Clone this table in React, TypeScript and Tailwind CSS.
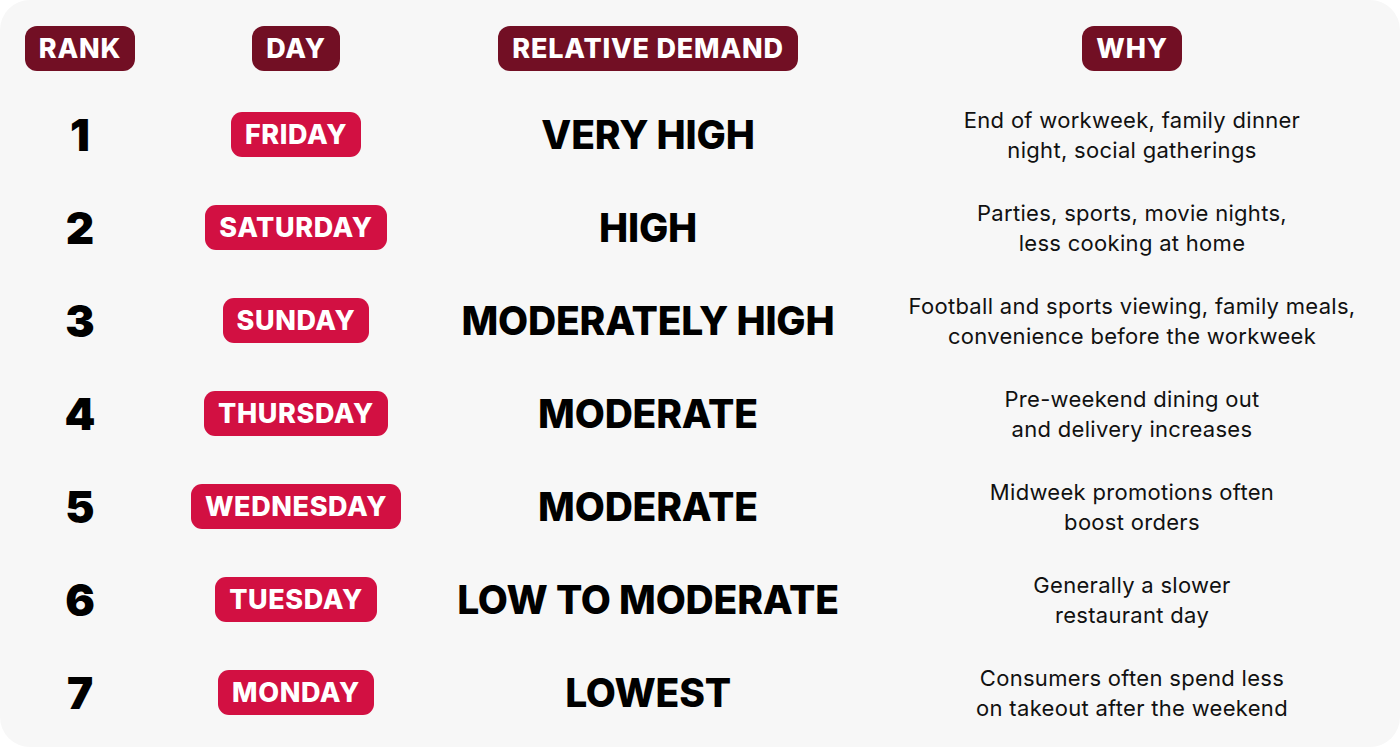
import React from "react";

const rows = [
  { rank: "1", day: "FRIDAY", demand: "VERY HIGH", why: ["End of workweek, family dinner", "night, social gatherings"] },
  { rank: "2", day: "SATURDAY", demand: "HIGH", why: ["Parties, sports, movie nights,", "less cooking at home"] },
  { rank: "3", day: "SUNDAY", demand: "MODERATELY HIGH", why: ["Football and sports viewing, family meals,", "convenience before the workweek"] },
  { rank: "4", day: "THURSDAY", demand: "MODERATE", why: ["Pre-weekend dining out", "and delivery increases"] },
  { rank: "5", day: "WEDNESDAY", demand: "MODERATE", why: ["Midweek promotions often", "boost orders"] },
  { rank: "6", day: "TUESDAY", demand: "LOW TO MODERATE", why: ["Generally a slower", "restaurant day"] },
  { rank: "7", day: "MONDAY", demand: "LOWEST", why: ["Consumers often spend less", "on takeout after the weekend"] },
];

const font = { fontFamily: "Inter, 'Noto Sans', sans-serif" };

function HeadPill({ children }: { children: React.ReactNode }) {
  return (
    <div className="h-[45px] px-[14px] rounded-[12px] bg-[#720f24] text-white text-[27px] font-extrabold tracking-[0.8px] flex items-center justify-center leading-none">
      {children}
    </div>
  );
}

export default function App() {
  return (
    <div className="w-[1400px] h-[747px] bg-white" style={font}>
      <div className="w-full h-full bg-[#f7f7f7] rounded-[30px] pt-[26px]">
        <div className="grid grid-cols-[160px_272px_432px_536px] h-[45px] mb-[17px]">
          <div className="flex justify-center"><HeadPill>RANK</HeadPill></div>
          <div className="flex justify-center"><HeadPill>DAY</HeadPill></div>
          <div className="flex justify-center"><HeadPill>RELATIVE DEMAND</HeadPill></div>
          <div className="flex justify-center"><HeadPill>WHY</HeadPill></div>
        </div>
        {rows.map((r) => (
          <div key={r.rank} className="grid grid-cols-[160px_272px_432px_536px] h-[93px] items-center">
            <div className="flex justify-center text-[44px] font-black text-black leading-none">{r.rank}</div>
            <div className="flex justify-center">
              <div className="h-[45px] px-[14px] rounded-[11px] bg-[#d21042] text-white text-[27px] font-extrabold tracking-[0.6px] flex items-center leading-none">
                {r.day}
              </div>
            </div>
            <div className="flex justify-center text-[39px] font-extrabold text-black leading-none tracking-[-0.2px]">{r.demand}</div>
            <div className="flex flex-col items-center text-[22px] text-[#111] leading-[30px] tracking-[0.3px]">
              <div>{r.why[0]}</div>
              <div>{r.why[1]}</div>
            </div>
          </div>
        ))}
      </div>
    </div>
  );
}
